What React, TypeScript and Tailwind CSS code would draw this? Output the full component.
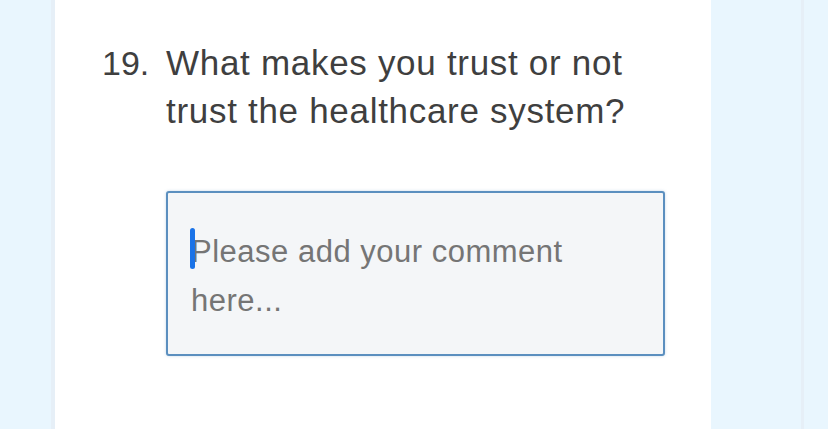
export default function App() {
  return (
    <div
      className="flex h-[429px] w-[828px] overflow-hidden bg-[#e9f6fe]"
      style={{ fontFamily: '"Liberation Sans", Arial, sans-serif' }}
    >
      <div className="w-[51px] shrink-0 bg-[#e9f6fe]" />
      <div className="w-[4px] shrink-0 bg-[#e6eff7]" />
      <div className="w-[656px] shrink-0 bg-white pt-[39px]">
        <div className="flex leading-[48px] text-[#3f3f3f]">
          <span className="w-[111px] shrink-0 pl-[47px] text-[34px]">19.</span>
          <h2 className="w-[480px] text-[35px] tracking-[0.7px]">What makes you trust or not trust the healthcare system?</h2>
        </div>
        <div className="ml-[111px] mt-[56px] h-[165px] w-[499px] rounded-[3px] border-2 border-[#5b8fbf] bg-[#f4f6f8] pl-[23px] pr-[40px] pt-[34px] shadow-[0_0_3px_rgba(91,143,191,0.35)]">
          <p className="relative text-[31px] leading-[49px] tracking-[0.5px] text-[#757575]">
            <span className="absolute left-[-1px] top-[1px] h-[41px] w-[5px] rounded-full bg-[#1a73e8]" />
            Please add your comment here...
          </p>
        </div>
      </div>
      <div className="w-[90px] shrink-0 bg-[#e9f6fe]" />
      <div className="w-[3px] shrink-0 bg-[#e6eff7]" />
      <div className="flex-1 bg-[#e9f6fe]" />
    </div>
  );
}
